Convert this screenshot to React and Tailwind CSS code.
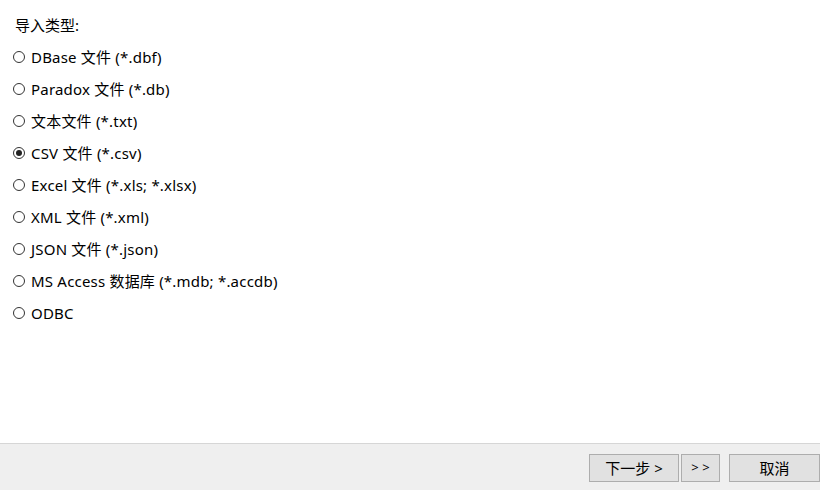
import React from 'react';

const options = [
  'DBase 文件 (*.dbf)',
  'Paradox 文件 (*.db)',
  '文本文件 (*.txt)',
  'CSV 文件 (*.csv)',
  'Excel 文件 (*.xls; *.xlsx)',
  'XML 文件 (*.xml)',
  'JSON 文件 (*.json)',
  'MS Access 数据库 (*.mdb; *.accdb)',
  'ODBC',
];

export default function App() {
  const [sel, setSel] = React.useState(3);
  return (
    <div className="w-[820px] h-[490px] flex flex-col bg-white text-[15px] text-black overflow-hidden" style={{ fontFamily: '"Noto Sans", "Noto Sans CJK SC", sans-serif' }}>
      <div className="flex-1 pl-[15px] pt-[14px]">
        <div className="h-[22px] leading-[22px]">导入类型:</div>
        <div className="mt-[5px] flex flex-col">
          {options.map((o, i) => (
            <label key={o} onClick={() => setSel(i)} className="h-[32px] flex items-center cursor-default">
              <span className="w-[12px] h-[12px] rounded-full border border-[#333] flex items-center justify-center shrink-0 -ml-[2px]">
                {sel === i && <span className="w-[6px] h-[6px] rounded-full bg-[#222]" />}
              </span>
              <span className="ml-[6px] tracking-[0.2px]">{o}</span>
            </label>
          ))}
        </div>
      </div>
      <div className="h-[47px] shrink-0 bg-[#efefef] border-t border-[#d6d6d6] flex items-start pt-[10px] pl-[589px]">
        <button className="w-[90px] h-[28px] border border-[#adadad] bg-[#e1e1e1] text-[15px]">下一步 &gt;</button>
        <button className="ml-[2px] w-[39px] h-[28px] border border-[#adadad] bg-[#e1e1e1] text-[13px]">&gt; &gt;</button>
        <button className="ml-[9px] w-[91px] h-[28px] border border-[#adadad] bg-[#e1e1e1] text-[15px] shrink-0">取消</button>
      </div>
    </div>
  );
}
